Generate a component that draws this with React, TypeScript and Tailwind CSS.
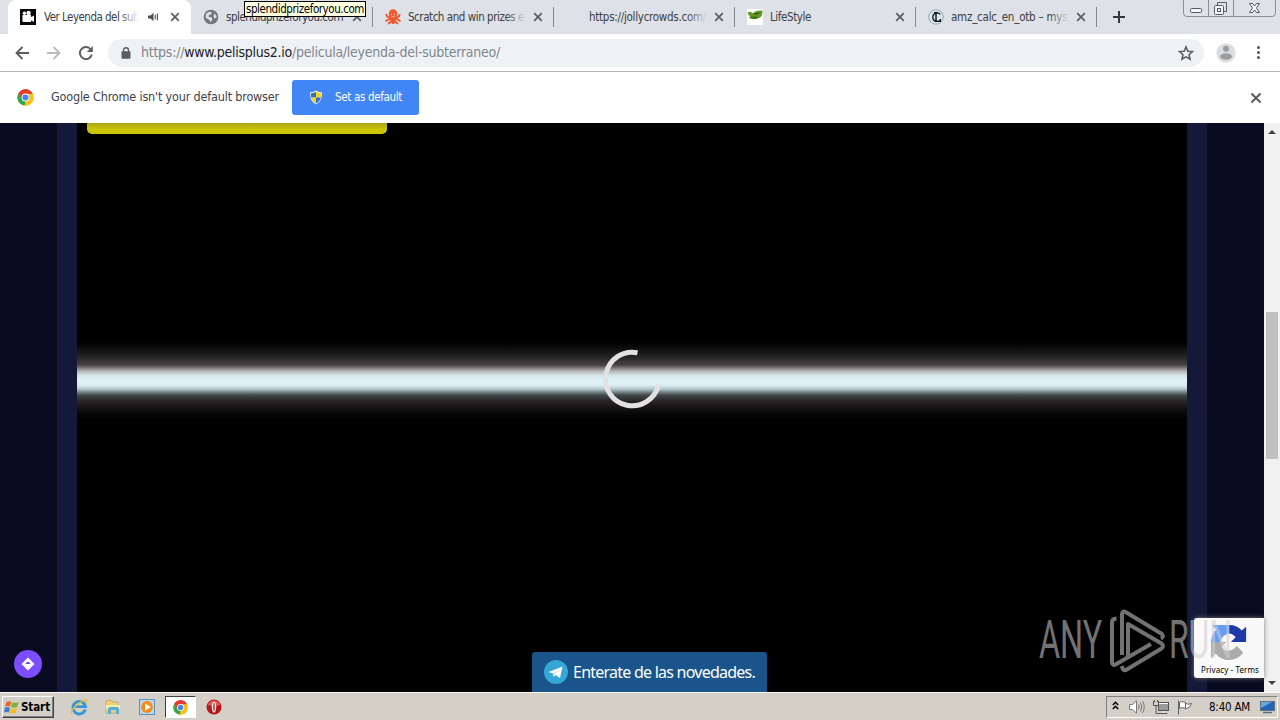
import { useLayoutEffect, useRef, useState, type ReactNode } from "react";

/* Single line of text whose letter spacing is set so that it fills `w` pixels. */
function Fit({ w, className = "", children }: { w: number; className?: string; children: ReactNode }) {
  const ref = useRef<HTMLSpanElement>(null);
  const [ls, setLs] = useState(0);
  useLayoutEffect(() => {
    const el = ref.current;
    if (!el) return;
    const n = (el.textContent || "").length;
    setLs((w - el.getBoundingClientRect().width) / n);
  }, [w]);
  return (
    <span ref={ref} style={{ letterSpacing: ls }} className={`inline-block shrink-0 whitespace-pre ${className}`}>
      {children}
    </span>
  );
}

function Cross({ className = "" }: { className?: string }) {
  return (
    <svg viewBox="0 0 10 10" className={`shrink-0 ${className}`}>
      <path d="M1.2 1.2L8.8 8.8M8.8 1.2L1.2 8.8" stroke="currentColor" strokeWidth="1.7" />
    </svg>
  );
}

function ChromeLogo({ className = "" }: { className?: string }) {
  return (
    <svg viewBox="0 0 48 48" className={`shrink-0 ${className}`}>
      <circle cx="24" cy="24" r="23" fill="#fbc116" />
      <path d="M24 24L4.1 12.5A23 23 0 0 1 43.9 12.5H24Z" fill="#e33b2e" />
      <path d="M4.1 12.5L14 29.8L24 35L21 46.8A23 23 0 0 1 4.1 12.5Z" fill="#2da94f" />
      <path d="M43.9 12.5A23 23 0 0 1 21 46.8L33.5 29L24 13.5V12.5Z" fill="#fbc116" />
      <path d="M4.1 12.5L14 29.8L24 13.5H44.4A23 23 0 0 0 4.1 12.5Z" fill="#e33b2e" />
      <circle cx="24" cy="24" r="11" fill="#fff" />
      <circle cx="24" cy="24" r="8.6" fill="#4285f4" />
    </svg>
  );
}

function CameraIcon() {
  return (
    <svg viewBox="0 0 16 16" className="size-4 shrink-0">
      <rect width="16" height="16" fill="#080808" />
      <circle cx="4.4" cy="4.2" r="1.7" fill="#fff" />
      <circle cx="8.6" cy="4" r="2.2" fill="#fff" />
      <rect x="2.4" y="6" width="8.8" height="7" rx="1" fill="#fff" />
      <path d="M10.6 8.5L14 6.5V13L10.6 11Z" fill="#fff" />
    </svg>
  );
}

function GlobeIcon() {
  return (
    <svg viewBox="0 0 16 16" className="size-4 shrink-0">
      <circle cx="8" cy="8" r="7.3" fill="#74777b" />
      <path d="M3.5 4.5Q5 3 7.5 2.8L9 4.2L7.5 5.5L6 5.8L5.5 7.8L8.6 8.4L9.5 10L8 12.8Q7 13.5 6.8 11.5L4.5 9.8L2.8 9Q2.5 6 3.5 4.5Z" fill="#dee1e6" />
      <path d="M11 4.5L13.3 6.2L13.6 8.5L11.5 9.5L10.6 7.5Z" fill="#dee1e6" />
    </svg>
  );
}

function OctopusIcon() {
  return (
    <svg viewBox="0 0 16 16" className="size-4 shrink-0">
      <g fill="none" stroke="#f0572a" strokeWidth="1.9" strokeLinecap="round">
        <path d="M6 8Q2 9 1.4 5.8M10 8Q14 9 14.6 5.8M6 9.5Q3.5 10 1.2 11.8M10 9.5Q12.5 10 14.8 11.8M7 10Q6 13.5 3.6 14.4M9 10Q10 13.5 12.4 14.4M7.5 10V14M8.5 10V14" />
      </g>
      <ellipse cx="8" cy="4.8" rx="4.2" ry="4.5" fill="#f0572a" />
      <path d="M5 6.2H11V10.5H5Z" fill="#f0572a" />
      <circle cx="6.5" cy="5.5" r=".7" fill="#fbd5c8" />
      <circle cx="9.5" cy="5.5" r=".7" fill="#fbd5c8" />
      <path d="M6.2 7.8H9.8" stroke="#fbd5c8" strokeWidth=".8" />
    </svg>
  );
}

function LeafIcon() {
  return (
    <svg viewBox="0 0 16 16" className="size-4 shrink-0">
      <rect width="16" height="16" fill="#fff" />
      <path d="M.5 3.5Q4 1.5 6 4.5Q8 1 15.5 1.5Q16 8 11.5 9.2Q5 12 1.5 8Q3 8.5 3 7Q1 6 .5 3.5Z" fill="#639a26" />
      <path d="M6 4.6Q8.5 7.5 13.5 3.5Q10 3.5 6 4.6Z" fill="#365f18" />
      <path d="M2.5 8.2Q7 11.5 12 8.5L8 7Z" fill="#477a1b" />
    </svg>
  );
}

function CIcon() {
  return (
    <svg viewBox="0 0 16 16" className="size-4 shrink-0">
      <circle cx="8" cy="8" r="7.2" fill="#dfe7ee" stroke="#8da2b4" strokeWidth="1" />
      <path d="M12.3 5.4A4.3 4.3 0 1 0 7.5 12.2" fill="none" stroke="#101820" strokeWidth="1.4" />
      <path d="M6 3.8H10M8 3.8V12M6.5 12.2H12.3V10" fill="none" stroke="#101820" strokeWidth="1.5" />
    </svg>
  );
}

const tabs = [
  { icon: <GlobeIcon />, title: "splendidprizeforyou.com", w: 117 },
  { icon: <OctopusIcon />, title: "Scratch and win prizes e", w: 116 },
  { icon: <span className="size-4 shrink-0" />, title: "https://jollycrowds.com/", w: 117 },
  { icon: <LeafIcon />, title: "LifeStyle", w: 41 },
  { icon: <CIcon />, title: "amz_calc_en_otb – mysi", w: 119 },
];

function TabStrip() {
  return (
    <div className="relative flex h-[34px] bg-[#dee1e7] pl-2">
      <div className="flex h-full w-[183px] items-center rounded-t-lg bg-white pl-3 text-[#3c4043]">
        <CameraIcon />
        <div className="relative ml-2 flex w-[95px] items-center overflow-hidden">
          <Fit w={95} className="text-[11.5px] leading-[18px]">Ver Leyenda del sub</Fit>
          <div className="absolute inset-y-0 right-0 w-5 bg-linear-to-r from-transparent to-white" />
        </div>
        <svg viewBox="0 0 12 10" className="ml-[9px] h-[10px] w-3 shrink-0">
          <path d="M0 3.5H2.5L5.5 .8V9.2L2.5 6.5H0Z" fill="#4b4f53" />
          <path d="M7.3 2.8V7.2M9.4 1.5V8.5" stroke="#4b4f53" strokeWidth="1.1" />
        </svg>
        <Cross className="ml-[10px] size-[10px] text-[#5a5e63]" />
      </div>
      {tabs.map((t, i) => (
        <div key={t.title} className={`flex h-full shrink-0 items-center pl-3 text-[#3c4043] ${i === 0 ? "w-[182px]" : "w-[181px]"}`}>
          {t.icon}
          <div className="relative ml-[7px] flex w-[119px] items-center overflow-hidden">
            <Fit w={t.w} className="text-[11.5px] leading-[18px]">{t.title}</Fit>
            {i !== 0 && <div className="absolute inset-y-0 right-0 w-5 bg-linear-to-r from-transparent to-[#dee1e7]" />}
          </div>
          <Cross className="ml-[7px] size-[10px] text-[#5a5e63]" />
          <div className="ml-[10px] h-[20px] w-px shrink-0 bg-[#85898f]" />
        </div>
      ))}
      <svg viewBox="0 0 12 12" className="mt-[11px] ml-4 size-3">
        <path d="M6 0V12M0 6H12" stroke="#34383d" strokeWidth="2" />
      </svg>
      <svg viewBox="0 0 93 17" className="mr-1 ml-auto h-[17px] w-[93px]" fill="none">
        <path d="M.5 -2V13Q.5 16.5 4 16.5H89Q92.5 16.5 92.5 13V-2M25.5 0V16M50.5 0V16" stroke="#8b9097" />
        <rect x="7.5" y="8.5" width="11" height="4" rx="1" stroke="#565b63" fill="#f4f5f7" />
        <path d="M34.5 5.5V2.5H43.5V11.5H40.5" stroke="#565b63" />
        <rect x="31.5" y="5.5" width="9" height="9" rx="1" stroke="#565b63" fill="#f4f5f7" />
        <rect x="34.5" y="8.5" width="3" height="3" stroke="#565b63" />
        <path d="M66.500 3.5H69.5L71.5 6L73.5 3.5H76.5L73.5 8L76.5 12.5H73.5L71.5 10L69.5 12.5H66.5L69.5 8Z" stroke="#565b63" fill="#f4f5f7" />
      </svg>
      <div className="absolute top-[1px] left-[244px] flex h-4 w-[122px] items-center border border-black bg-[#ffffe1] pl-px">
        <Fit w={118} className="text-[11.5px] leading-[16px] text-black">splendidprizeforyou.com</Fit>
      </div>
    </div>
  );
}

function Toolbar() {
  return (
    <div className="flex h-[37px] shrink-0 items-center bg-white">
      <svg viewBox="0 0 14 14" className="ml-[15px] size-[14px]" fill="none" stroke="#5a5d61" strokeWidth="1.9">
        <path d="M14 7H1.5M7.5 1L1.5 7L7.5 13" />
      </svg>
      <svg viewBox="0 0 14 14" className="ml-[18px] size-[14px]" fill="none" stroke="#b9bbbd" strokeWidth="1.9">
        <path d="M0 7H12.5M6.5 1L12.5 7L6.5 13" />
      </svg>
      <svg viewBox="0 0 14 14" className="ml-[18px] size-[14px]" fill="none" stroke="#5a5d61" strokeWidth="1.9">
        <path d="M11.8 3.5A6 6 0 1 0 12.8 8.5" />
        <path d="M13.8 0V6H7.8Z" fill="#5a5d61" stroke="none" />
      </svg>
      <div className="ml-[15px] flex h-7 w-[1096px] items-center rounded-full bg-[#eff2f5] pl-[13px]">
        <svg viewBox="0 0 10 12" className="h-3 w-[10px] shrink-0">
          <path d="M2.5 5V3.3A2.5 2.5 0 0 1 7.5 3.3V5" fill="none" stroke="#5a5d61" strokeWidth="1.4" />
          <rect x=".5" y="4.3" width="9" height="7.5" rx="1" fill="#5a5d61" />
        </svg>
        <Fit w={359} className="mb-[2px] ml-[10px] text-[14px] leading-5 text-[#80868b]">
          https://<span className="text-[#202124]">www.pelisplus2.io</span>/pelicula/leyenda-del-subterraneo/
        </Fit>
        <svg viewBox="0 0 24 24" className="mr-[10px] ml-auto size-4" fill="none" stroke="#5a5d61" strokeWidth="2.3">
          <path d="M12 2.8L14.8 9.3L21.8 9.9L16.5 14.5L18.1 21.4L12 17.7L5.9 21.4L7.5 14.5L2.2 9.9L9.2 9.3Z" />
        </svg>
      </div>
      <svg viewBox="0 0 20 20" className="ml-3 size-5">
        <circle cx="10" cy="10" r="9.7" fill="#dcddde" />
        <circle cx="10" cy="5.8" r="3" fill="#9c9d9f" />
        <ellipse cx="10" cy="13.5" rx="6" ry="3.2" fill="#9c9d9f" />
      </svg>
      <div className="ml-[21px] flex flex-col gap-[2px]">
        <div className="size-[3px] rounded-full bg-[#505357]" />
        <div className="size-[3px] rounded-full bg-[#505357]" />
        <div className="size-[3px] rounded-full bg-[#505357]" />
      </div>
    </div>
  );
}

function InfoBar() {
  return (
    <div className="flex h-[52px] shrink-0 items-center border-t border-[#b4b5b7] bg-white">
      <ChromeLogo className="ml-[17px] size-[17px]" />
      <Fit w={228} className="ml-[17px] text-[12.5px] text-[#3f4246]">Google Chrome isn't your default browser</Fit>
      <div className="ml-[13px] flex h-[35px] w-[127px] items-center rounded-[3px] bg-[#4285f4]">
        <svg viewBox="0 0 14 16" className="ml-[17px] h-[15px] w-[14px]">
          <path d="M7 .5Q10 2.5 13.5 2.3Q14 11.5 7 15.5Q0 11.5 .5 2.3Q4 2.5 7 .5Z" fill="#e9e9d8" />
          <path d="M7 2V8H1.7Q1.3 6 1.6 3.5Q4.5 3.5 7 2Z" fill="#316fc4" />
          <path d="M7 2V8H12.3Q12.7 6 12.4 3.5Q9.5 3.5 7 2Z" fill="#f5d21c" />
          <path d="M7 8V14.3Q2.8 12 1.7 8Z" fill="#f5d21c" />
          <path d="M7 8V14.3Q11.2 12 12.3 8Z" fill="#316fc4" />
        </svg>
        <Fit w={67} className="ml-3 text-[11.5px] text-white">Set as default</Fit>
      </div>
      <Cross className="mr-[18px] ml-auto size-3 text-[#5a5d61]" />
    </div>
  );
}

function Watermark() {
  return (
    <div className="absolute top-[486px] left-[1038px] h-[64px] w-[196px] text-[#cfcfcf] opacity-55">
      <span className="absolute top-[5px] left-[1px] origin-left scale-x-[0.61] font-[Roboto] text-[53px] leading-[52px] font-normal">ANY</span>
      <svg viewBox="0 0 56 64" className="absolute top-0 left-[72px] h-[64px] w-[56px]" fill="none" stroke="currentColor" strokeWidth="4" strokeLinejoin="round">
        <path d="M6.5 9.5Q2 10 2 13V53Q2.5 57 5.5 55.5L41 35M12 46V5Q12.5 1.5 15.5 3L52 25Q54 28 51 29.5M18 47V15L51.5 34.5Q54.5 37 51.500 39.5L16 61Q12.5 62 12 57" />
      </svg>
      <span className="absolute top-[5px] left-[131px] origin-left scale-x-[0.6] font-[Roboto] text-[53px] leading-[52px] font-normal">RUN</span>
    </div>
  );
}

function Page() {
  return (
    <div className="relative flex h-[569px] shrink-0 overflow-hidden bg-[#090c20]">
      <div className="ml-[57px] flex w-[1150px] bg-[#14193a] px-5">
        <div className="relative flex-1 bg-black">
          <div className="ml-[10px] h-[11px] w-[300px] rounded-b-[5px] bg-linear-to-b from-[#aaa610] to-[#cbc607] to-60%" />
          <div className="mt-[206px] h-[84px] bg-[linear-gradient(to_bottom,#000_2px,#111_10px,#282828_18px,#474344_25px,#7d797a_28px,#b5b2b4_31px,#d5e2e8_35px,#e0f0f7_39px,#def0f6_45px,#b5c7ce_49px,#78878b_52px,#444a4c_55px,#2c292b_60px,#1a161a_66px,#0a080a_73px,#000_79px)]" />
          <svg viewBox="0 0 60 60" className="absolute top-[226px] left-[525px] size-[60px]" fill="none">
            <path d="M35.5 3.7A26.8 26.8 0 1 0 56.5 35.5" stroke="#e2e2e2" strokeWidth="5" />
          </svg>
        </div>
      </div>
      <div className="ml-auto flex w-4 flex-col items-center bg-[#f1f1f1]">
        <svg viewBox="0 0 8 4" className="mt-[7px] h-1 w-2"><path d="M0 4L4 0L8 4Z" fill="#444" /></svg>
        <div className="mt-[178px] h-[147px] w-3 bg-[#c1c1c1]" />
        <svg viewBox="0 0 8 4" className="mt-auto mb-[7px] h-1 w-2"><path d="M0 0L4 4L8 0Z" fill="#444" /></svg>
      </div>

      <svg viewBox="0 0 28 28" className="absolute top-[527px] left-[14px] size-7">
        <circle cx="14" cy="14" r="14" fill="#7c4dff" />
        <path d="M14 7.5L20.5 14L14 20.5L7.5 14Z" fill="#fff" />
        <path d="M11.5 14Q14 9.5 16.5 14Z" fill="#6b44dd" />
      </svg>

      <div className="absolute top-[529px] left-[532px] flex h-10 w-[235px] items-center rounded-t-[3px] bg-[#19558b] pl-3">
        <svg viewBox="0 0 24 24" className="size-6">
          <circle cx="12" cy="12" r="12" fill="#34a7d6" />
          <path d="M4.5 12L18.5 6.5L16 18L11.5 15L9.5 17L9 13.5Z" fill="#fff" />
          <path d="M9 13.5L16 8.5L10.5 14.3L9.5 17Z" fill="#c6dceb" />
        </svg>
        <Fit w={182} className="ml-[5px] font-['Noto_Sans'] text-[16px] text-white">Enterate de las novedades.</Fit>
      </div>

      <div className="absolute top-[495px] left-[1194px] flex h-[60px] w-[70px] flex-col items-center rounded-l-[3px] bg-[#f9f9f9] shadow-[0_0_5px_#777]">
        <svg viewBox="0 0 40 40" className="mt-[5px] h-[38px] w-[38px]">
          <path d="M38 4V20H22L27 15Q24 11 20 11V2Q29 2 33.5 8Z" fill="#1c3aa9" />
          <path d="M20 2V11Q13 12 11 20H1Q2 10 7 7L2 2Z" fill="#4285f4" opacity=".8" />
          <path d="M1 20H17L12 25Q15 30 21 29Q26 28 28 24L35 31Q29 39 20 39Q11 39 6 32L1 37Z" fill="#ababab" />
        </svg>
        <Fit w={58} className="mt-[3px] ml-[2px] font-['Noto_Sans'] text-[8px] leading-3 text-black">Privacy - Terms</Fit>
      </div>
      <Watermark />
    </div>
  );
}

function Taskbar() {
  return (
    <div className="flex h-7 shrink-0 items-center border-t border-[#f8f7f4] bg-[#d4d0c8] pt-px">
      <div className="ml-[2px] flex h-[22px] w-[52px] items-center border border-t-white border-r-[#404040] border-b-[#404040] border-l-white shadow-[inset_-1px_-1px_#808080]">
        <svg viewBox="0 0 16 16" className="ml-px size-[15px] shrink-0">
          <path d="M2.5 2Q5 .5 7.8 2L6.6 7Q4 6 1.3 7Z" fill="#e9642b" />
          <path d="M8.7 2.5Q12 3.8 15.5 2L14.2 7.2Q11 9 7.5 7.5Z" fill="#7db33c" />
          <path d="M1 8Q4 7 6.4 8.2L5.2 13.2Q2.5 12.2 0 13.3Z" fill="#3b7fd0" />
          <path d="M7.3 8.6Q10.5 10 14 8.3L12.7 13.5Q9.5 15 6 13.7Z" fill="#f5bd2a" />
        </svg>
        <Fit w={29} className="mt-px ml-[2px] text-[11.5px] font-bold text-black">Start</Fit>
      </div>
      <svg viewBox="0 0 18 18" className="ml-[16px] size-[18px]" fill="none">
        <path d="M15.3 11.5A6.3 6.3 0 1 1 15.5 8.7H5" stroke="#3597d4" strokeWidth="2.8" />
        <path d="M2 16.5Q-1 14 7 7Q15 .5 16.8 2Q17.5 3 16 5" stroke="#e9bd3c" strokeWidth="1.3" />
      </svg>
      <svg viewBox="0 0 16 16" className="ml-[17px] size-4">
        <path d="M1 2L6 1L7 3H13V14H1Z" fill="#ecd17c" stroke="#c1a04b" strokeWidth=".7" />
        <path d="M1 6H15V10H1Z" fill="#f8eaa9" />
        <path d="M3 15V10Q3 8 5 8H12Q14 8 14 10V15H11V11H6V15Z" fill="#57acd8" />
      </svg>
      <svg viewBox="0 0 16 16" className="ml-[18px] size-4">
        <rect x=".5" y=".5" width="15" height="15" fill="#bcd8ee" stroke="#5791c0" />
        <circle cx="8" cy="8" r="5.9" fill="#f28a1c" />
        <path d="M6 4.5L12 8L6 11.5Z" fill="#fff" />
      </svg>
      <div className="ml-[10px] flex h-[22px] w-[31px] items-center justify-center border border-t-[#404040] border-r-white border-b-white border-l-[#404040] bg-white">
        <ChromeLogo className="size-[15px]" />
      </div>
      <svg viewBox="0 0 16 16" className="ml-[10px] size-4">
        <circle cx="8" cy="8" r="7.5" fill="#b8151b" />
        <path d="M1.5 6A7 7 0 0 1 14.5 6Q8 8 1.5 6Z" fill="#df5654" />
        <ellipse cx="8" cy="8" rx="2.2" ry="5.5" fill="#fff" />
        <ellipse cx="8" cy="8" rx=".7" ry="4.5" fill="#a01015" />
      </svg>
      <div className="mr-[2px] ml-auto flex h-[22px] w-[172px] items-center border border-t-[#808080] border-r-white border-b-white border-l-[#808080]">
        <svg viewBox="0 0 7 9" className="mb-1 ml-[5px] h-[9px] w-[7px]" fill="none" stroke="#000" strokeWidth="1.4">
          <path d="M.8 4L3.5 1.2L6.2 4M.8 8L3.5 5.2L6.2 8" />
        </svg>
        <svg viewBox="0 0 16 14" className="ml-[10px] h-[14px] w-4" fill="none" stroke="#7c7b78">
          <path d="M.5 4.5H3.5L7.5 .8V13.2L3.5 9.5H.5Z" fill="#fff" />
          <path d="M9.5 4.5Q11 7 9.5 9.5M11.5 2.5Q14 7 11.5 11.5M13.5 1Q17 7 13.5 13" />
        </svg>
        <svg viewBox="0 0 16 15" className="ml-2 h-[15px] w-4" fill="none" stroke="#565553">
          <rect x="5.5" y="2.5" width="10" height="8" fill="#999" />
          <path d="M5 3.5H15M5.5 13.5H15.5M10.5 11V13" stroke="#fff" />
          <path d="M.5 1V5.5H5.5V1M1.5 0V2M4.5 0V2M3 6V13.5H14.5" />
        </svg>
        <svg viewBox="0 0 16 15" className="ml-2 h-[15px] w-4" fill="#fff" stroke="#65635f">
          <path d="M1.5 14.5V.5M2.5 2.5Q5 .5 8.5 2.5V8.5Q5 6.5 2.5 8.5ZM8.5 3.5Q11 5 14.5 3.5L13 6.5L8.5 9" />
        </svg>
        <Fit w={41} className="mt-px ml-4 text-[11.5px] text-black">8:40 AM</Fit>
        <svg viewBox="0 0 15 14" className="ml-[10px] h-[14px] w-[15px]">
          <rect x=".5" y="1.5" width="14" height="9" fill="#2466b5" stroke="#5b7388" />
          <path d="M1 2H12L1 8Z" fill="#69a8df" />
          <path d="M3 12.5H12" stroke="#537086" strokeWidth="1.5" />
        </svg>
      </div>
    </div>
  );
}

export default function App() {
  return (
    <div className="flex h-[720px] w-[1280px] flex-col overflow-hidden bg-white font-['DejaVu_Sans_Condensed','Noto_Sans',sans-serif]">
      <TabStrip />
      <Toolbar />
      <InfoBar />
      <Page />
      <Taskbar />
    </div>
  );
}
